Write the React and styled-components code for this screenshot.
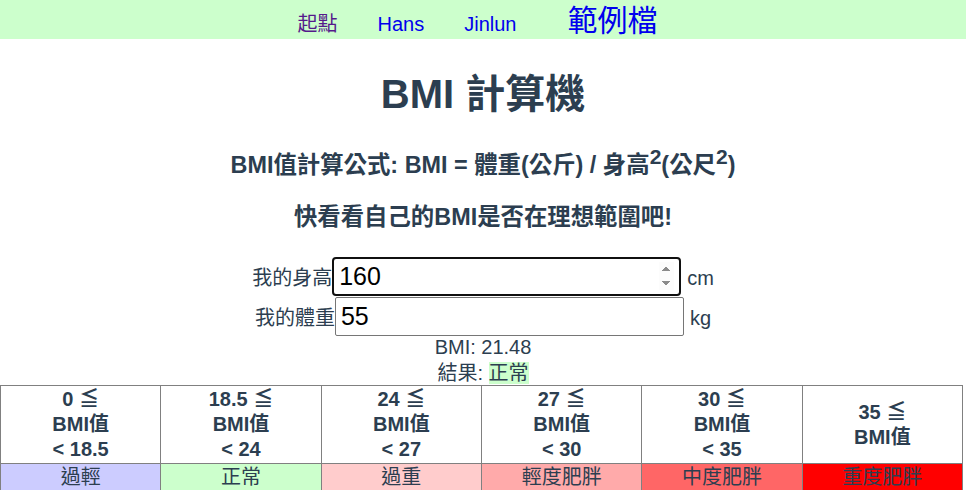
import React from 'react';
import styled, { createGlobalStyle } from 'styled-components';

const GlobalStyle = createGlobalStyle`
  body {
    margin: 0;
    background: #fff;
    font-family: "Liberation Sans", "Noto Sans CJK TC", sans-serif;
  }
`;

const Page = styled.div`
  color: #2c3e50;
  font-size: 20px;
  text-align: center;
`;

const Nav = styled.nav`
  display: flex;
  justify-content: center;
  align-items: baseline;
  height: 39px;
  box-sizing: border-box;
  padding: 6px 11px 0 0;
  background-color: #ccffcc;
  line-height: 1;
`;

const NavLink = styled.a`
  color: ${(p) => (p.$visited ? '#551a8b' : '#0000ee')};
  font-size: ${(p) => (p.$big ? '30px' : '20px')};
  text-decoration: none;
  margin-left: ${(p) => (p.$first ? '0' : p.$big ? '51px' : '40px')};
`;

const Title = styled.h1`
  font-size: 40px;
  line-height: 46px;
  margin: 32px 0 0;
`;

const Formula = styled.h3`
  font-size: 23.4px;
  line-height: 28px;
  margin: 34px 0 0;

  sup {
    font-size: 0.9em;
    line-height: 0;
  }
`;

const Slogan = styled.h3`
  font-size: 23.4px;
  line-height: 28px;
  margin: 24px 0 0;
`;

const Form = styled.div`
  margin-top: 26px;
`;

const Row = styled.div`
  display: flex;
  justify-content: center;
  align-items: baseline;
  margin-bottom: 1px;
`;

const Label = styled.label`
  font-size: 20px;
`;

const Input = styled.input`
  width: 349px;
  height: 39px;
  box-sizing: border-box;
  padding: 0 5px;
  font-family: "Liberation Sans", sans-serif;
  font-size: 25px;
  color: #000;
  background: #fff;
  border: ${(p) => (p.$focused ? '2px solid #101010' : '1px solid #767676')};
  border-radius: ${(p) => (p.$focused ? '4px' : '2px')};
  outline: none;

  &::-webkit-inner-spin-button {
    opacity: ${(p) => (p.$focused ? 1 : 0)};
  }
`;

const Unit = styled.span`
  margin-left: 6px;
`;

const BmiLine = styled.div`
  line-height: 20px;
`;

const ResultLine = styled.div`
  line-height: 24px;
  padding-top: 4px;
`;

const Tag = styled.span`
  background-color: #ccffcc;
`;

const Table = styled.table`
  width: 963px;
  table-layout: fixed;
  border-collapse: collapse;
`;

const HeadCell = styled.td`
  border: 1px solid #808080;
  padding: 1px;
  font-weight: bold;
  font-size: 20px;
  line-height: 25px;
  vertical-align: middle;
`;

const LevelCell = styled.td`
  border: 1px solid #808080;
  padding: 1px;
  font-size: 20px;
  line-height: 25px;
  background-color: ${(p) => p.$bg};
`;

const levels = [
  { from: '0', to: '18.5', name: '過輕', bg: '#ccccff' },
  { from: '18.5', to: '24', name: '正常', bg: '#ccffcc' },
  { from: '24', to: '27', name: '過重', bg: '#ffcccc' },
  { from: '27', to: '30', name: '輕度肥胖', bg: '#ffaaaa' },
  { from: '30', to: '35', name: '中度肥胖', bg: '#ff6666' },
  { from: '35', to: null, name: '重度肥胖', bg: '#ff0000' },
];

export default function App() {
  return (
    <Page>
      <GlobalStyle />
      <Nav>
        <NavLink href="#" $first $visited>起點</NavLink>
        <NavLink href="#">Hans</NavLink>
        <NavLink href="#">Jinlun</NavLink>
        <NavLink href="#" $big>範例檔</NavLink>
      </Nav>

      <Title>BMI 計算機</Title>
      <Formula>
        BMI值計算公式: BMI = 體重(公斤) / 身高<sup>2</sup>(公尺<sup>2</sup>)
      </Formula>
      <Slogan>快看看自己的BMI是否在理想範圍吧!</Slogan>

      <Form>
        <Row>
          <Label>我的身高</Label>
          <Input type="number" defaultValue="160" $focused />
          <Unit>cm</Unit>
        </Row>
        <Row>
          <Label>我的體重</Label>
          <Input type="text" defaultValue="55" />
          <Unit>kg</Unit>
        </Row>
      </Form>

      <BmiLine>BMI: 21.48</BmiLine>
      <ResultLine>
        結果: <Tag>正常</Tag>
      </ResultLine>

      <Table>
        <tbody>
          <tr>
            {levels.map((l) => (
              <HeadCell key={l.name}>
                {l.from} ≦<br />
                BMI值
                {l.to && (
                  <>
                    <br />
                    &lt; {l.to}
                  </>
                )}
              </HeadCell>
            ))}
          </tr>
          <tr>
            {levels.map((l) => (
              <LevelCell key={l.name} $bg={l.bg}>
                {l.name}
              </LevelCell>
            ))}
          </tr>
        </tbody>
      </Table>
    </Page>
  );
}
